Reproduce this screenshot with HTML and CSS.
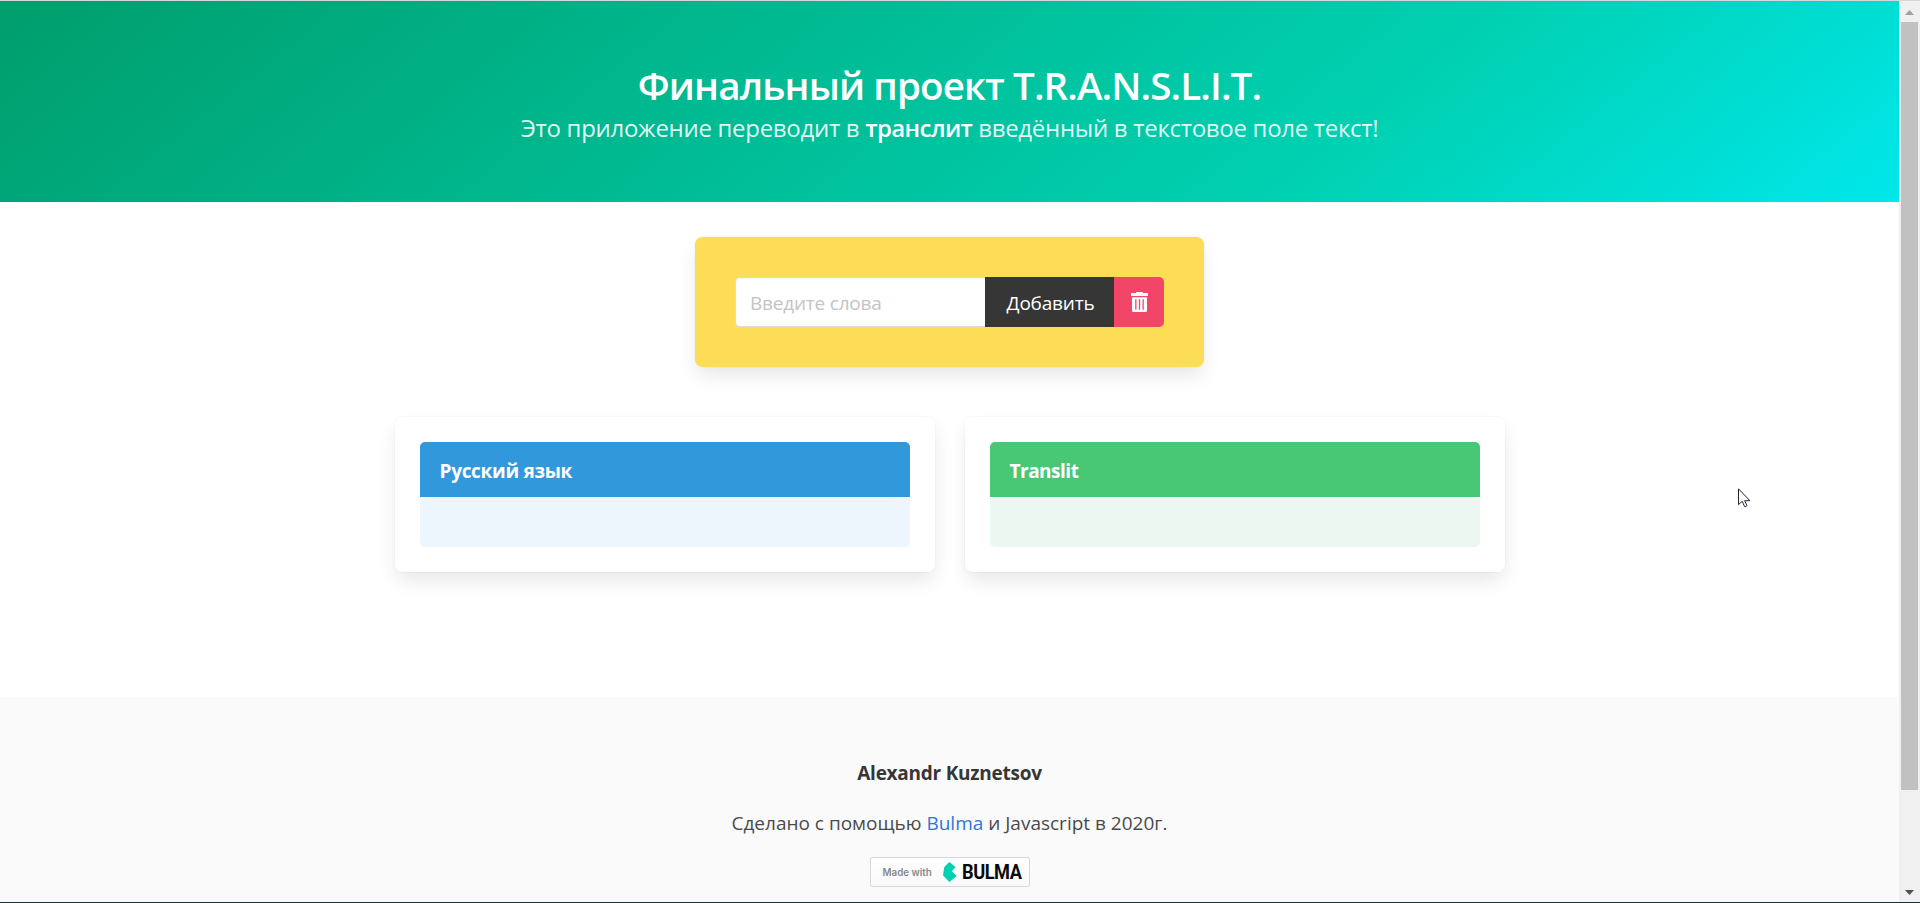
FILE: index.html
```html
<!DOCTYPE html>
<html lang="ru">
<head>
<meta charset="utf-8">
<title>T.R.A.N.S.L.I.T.</title>
<link rel="stylesheet" href="styles.css">
</head>
<body>
<div class="window">
  <div class="page">
    <section class="hero">
      <h1 class="title">Финальный проект T.R.A.N.S.L.I.T.</h1>
      <h2 class="subtitle">Это приложение переводит в <strong>транслит</strong> введённый в текстовое поле текст!</h2>
    </section>
    <main class="main">
      <form class="box form">
        <input class="input" type="text" placeholder="Введите слова">
        <button class="button add" type="button"><span>Добавить</span></button>
        <button class="button clear" type="button" aria-label="Очистить">
          <svg width="17" height="20" viewBox="0 0 17 20"><path fill="#fff" d="M0 1h5.2V0h6.6v1H17v3H0z"/><path fill="#fff" fill-rule="evenodd" d="M1 5.3h15V18.500q0 1.500-1.500 1.500h-12Q1 20 1 18.500zM4.200 7.200v10.600h1.300V7.200zm3.650 0v10.600h1.300V7.200zm3.650 0v10.600h1.300V7.200z"/></svg>
        </button>
      </form>
      <div class="columns">
        <div class="box card">
          <article class="message info">
            <div class="message-header"><p class="head-ru">Русский язык</p></div>
            <div class="message-body"></div>
          </article>
        </div>
        <div class="box card">
          <article class="message success">
            <div class="message-header"><p class="head-en">Translit</p></div>
            <div class="message-body"></div>
          </article>
        </div>
      </div>
    </main>
    <footer class="footer">
      <p class="author">Alexandr Kuznetsov</p>
      <p class="made">Сделано с помощью <a class="link">Bulma</a> и Javascript в 2020г.</p>
      <div class="badge">
        <span class="badge-text">Made with</span>
        <svg class="badge-mark" width="14" height="20" viewBox="0 0 14 20"><path fill="#00d1b2" d="M0 13.300 1.300 5 6.300 0l6.200 5-3.700 4.200 5 4.800-7.500 6z"/></svg>
        <span class="badge-name">BULMA</span>
      </div>
    </footer>
  </div>
  <div class="scrollbar">
    <svg class="arrow" width="9" height="5" viewBox="0 0 9 5"><path fill="#a0a0a0" d="M4.500 0 9 5H0z"/></svg>
    <div class="thumb"></div>
    <svg class="arrow down" width="9" height="5" viewBox="0 0 9 5"><path fill="#505050" d="M0 0h9L4.500 5z"/></svg>
  </div>
  <svg class="cursor" width="13" height="20" viewBox="0 0 13 20"><path fill="#fff" stroke="#1e2430" d="M.5.8v15.900l3.700-3.500 2.300 5.300q1.500.6 2.400-.9l-2.200-4.900h5.200z"/></svg>
</div>
</body>
</html>
```
FILE: styles.css
```css
* { box-sizing: border-box; }
html, body { margin: 0; height: 100%; overflow: hidden; }
body {
  background: #fff;
  color: #4a4a4a;
  font-family: "Open Sans", "Noto Sans", sans-serif;
  font-size: 19px;
}
h1, h2, p { margin: 0; }
.window {
  position: relative;
  display: flex;
  height: 903px;
  border-top: 1px solid #d5d8d8;
  border-bottom: 1px solid #1c3038;
}
.page { flex: 1; display: flex; flex-direction: column; }
.hero {
  height: 201px;
  padding-top: 62px;
  color: #fff;
  text-align: center;
  white-space: nowrap;
  background: linear-gradient(141deg, #009e6c 0%, #00d1b2 71%, #00e7eb 100%);
}
.title { font-size: 38.5px; font-weight: 600; line-height: 44px; letter-spacing: -0.86px; }
.subtitle { font-size: 24px; font-weight: 400; line-height: 42px; letter-spacing: -0.3px; color: rgba(255, 255, 255, .9); }
.subtitle strong { font-weight: 600; color: #fff; letter-spacing: -0.6px; }
.main { height: 495px; padding-top: 35px; display: flex; flex-direction: column; align-items: center; gap: 50px; }
.box {
  border-radius: 7.5px;
  box-shadow: 0 10px 20px -2px rgba(10, 10, 10, .1), 0 0 0 1px rgba(10, 10, 10, .02);
}
.form { display: flex; width: 509px; padding: 40px; background: #fddc56; }
.input {
  width: 250px;
  height: 50px;
  padding: 2px 14px 0;
  border: 1px solid #dbdbdb;
  border-right: 0;
  border-radius: 5px 0 0 5px;
  background: #fff;
  box-shadow: inset 0 1px 2px rgba(10, 10, 10, .05);
  font: inherit;
  letter-spacing: -0.2px;
}
.input::placeholder { color: #c4c4c4; opacity: 1; }
.button { height: 50px; padding: 0; border: 0; color: #fff; font: inherit; display: flex; align-items: center; justify-content: center; }
.add { width: 129px; padding: 1px 0 0 2px; background: #363636; letter-spacing: -0.2px; }
.clear { width: 50px; background: #f14668; border-radius: 0 5px 5px 0; }
.columns { display: flex; gap: 30px; }
.card { width: 540px; height: 155px; padding: 25px; background: #fff; }
.message { border-radius: 5px; overflow: hidden; }
.message-header { height: 55px; padding: 0 20px; line-height: 58px; color: #fff; font-weight: 700; letter-spacing: -0.5px; }
.head-ru { letter-spacing: -0.3px; }
.message-body { height: 50px; }
.info .message-header { background: #3298dc; }
.info .message-body { background: #edf5fd; }
.success .message-header { background: #48c774; }
.success .message-body { background: #edf7f2; }
.footer { flex: 1; padding-top: 61px; background: #fafafa; display: flex; flex-direction: column; align-items: center; line-height: 30px; white-space: nowrap; }
.author { color: #363636; font-weight: 700; letter-spacing: -0.25px; }
.made { margin-top: 20px; }
.link { color: #3273dc; }
.badge { margin-top: 19px; width: 160px; height: 30px; border: 1px solid #d8d8d8; border-radius: 2px; background: linear-gradient(#fff, #f9f9f9); display: flex; align-items: center; padding-left: 12px; }
.badge-text { width: 60px; color: #888; font: 600 9.800px "Inter", sans-serif; }
.badge-mark { flex: none; }
.badge-name { margin-left: 5px; color: #0a0a0a; font: 700 20px "Roboto", sans-serif; transform: scaleX(.91); transform-origin: left; letter-spacing: -0.5px; }
.scrollbar { width: 21px; background: #f0f0f0; display: flex; flex-direction: column; align-items: center; }
.arrow { margin: 9px 0 7px; flex: none; }
.thumb { width: 17px; height: 768px; background: #c1c1c1; }
.arrow.down { margin: 100px 0 0; }
.cursor { position: absolute; left: 1738px; top: 487px; }
```
